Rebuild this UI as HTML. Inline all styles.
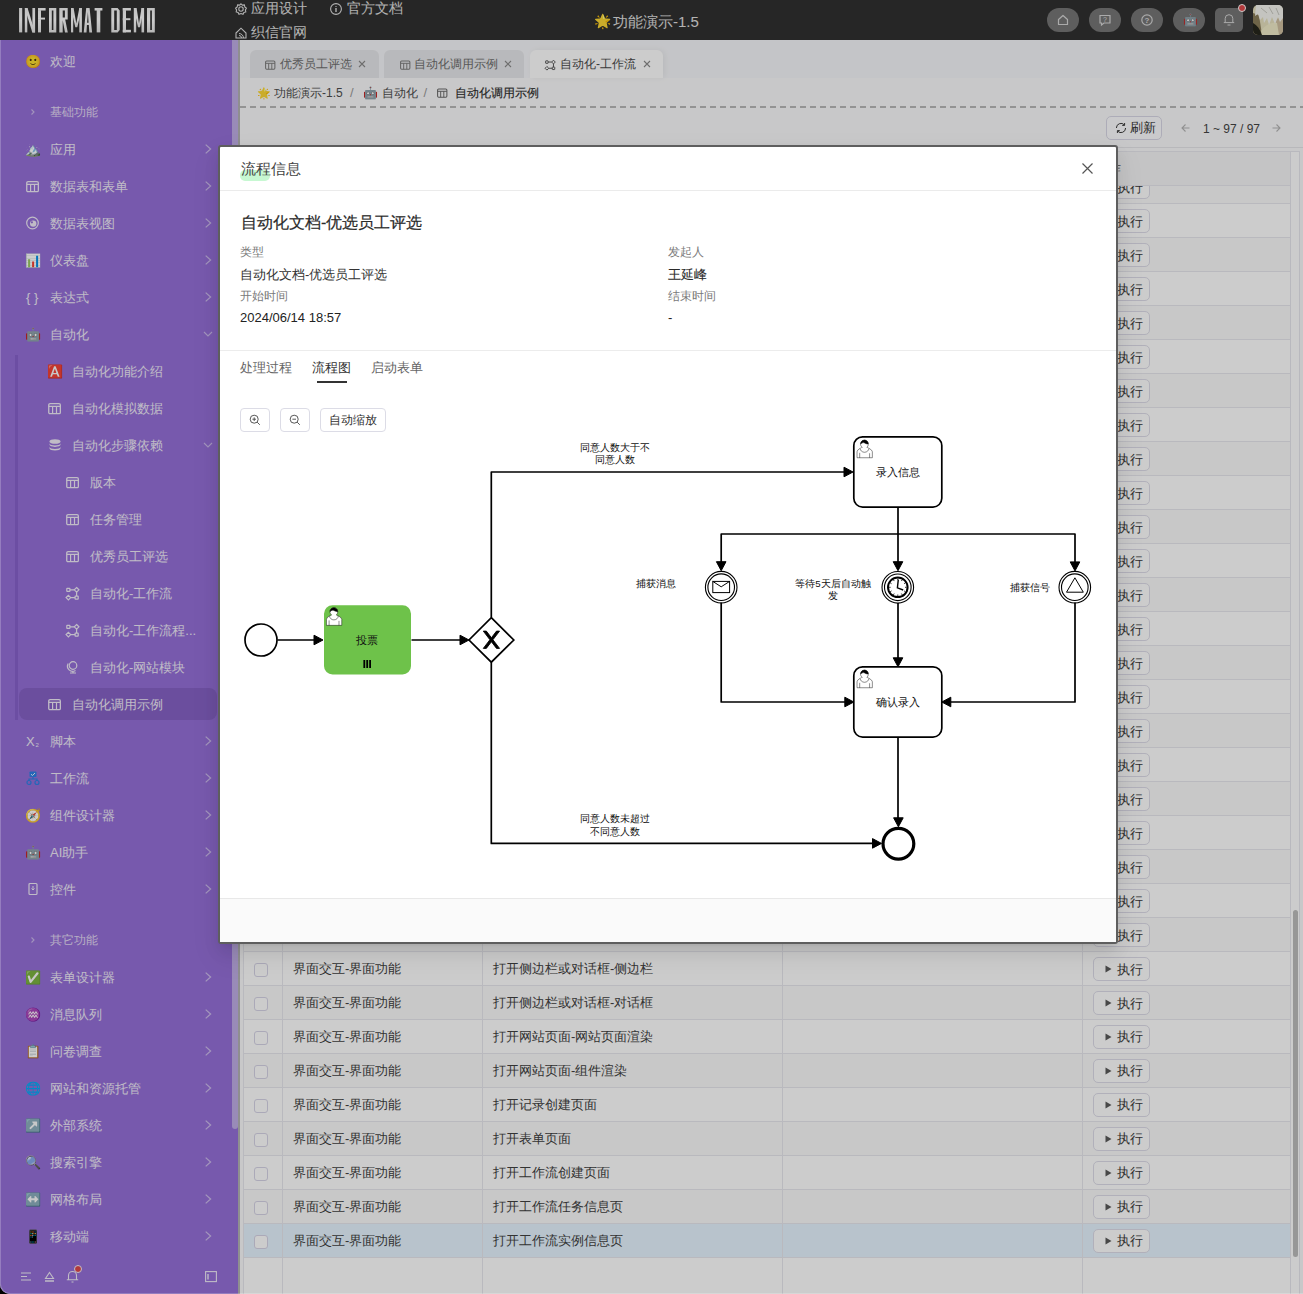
<!DOCTYPE html><html><head><meta charset="utf-8"><style>
*{box-sizing:border-box;margin:0;padding:0}
html,body{width:1303px;height:1294px;overflow:hidden;background:#000;font-family:"Liberation Sans",sans-serif}
.t{position:absolute;white-space:nowrap}
.a{position:absolute}
svg.a{overflow:visible}
.emo{font-family:"Liberation Sans",sans-serif}
</style></head><body>
<div id="page" class="a" style="left:0;top:0;width:1303px;height:1294px;overflow:hidden;border-radius:0 0 0 10px;background:#fbfbfc">
<div class="a" style="left:0px;top:0px;width:1303px;height:40px;background:#303030"></div>
<svg class="a" style="left:0px;top:0px;" width="170" height="40" viewBox="0 0 170 40"><defs><linearGradient id="lg" x1="0" y1="0" x2="0" y2="1"><stop offset="0" stop-color="#f2f2f2"/><stop offset="0.5" stop-color="#ffffff"/><stop offset="1" stop-color="#e6e6e6"/></linearGradient></defs><g fill="url(#lg)"><rect x="19.1" y="8.0" width="3.10" height="24.40"/><rect x="24.8" y="8.0" width="2.50" height="24.40"/><rect x="32.4" y="8.0" width="2.70" height="24.40"/><polygon points="24.8,8.0 27.6,8.0 35.1,32.4 32.3,32.4"/><rect x="38.0" y="8.0" width="3.00" height="24.40"/><rect x="38.0" y="8.0" width="7.60" height="2.60"/><rect x="38.0" y="17.6" width="7.00" height="2.00"/><path d="M49 8.0H56.3V32.4H49Z M51.8 10.5V29.9H53.4V10.5Z" fill-rule="evenodd"/><path d="M59.3 8.0H67.7V19.6H65.2L67.8 32.4H65.0L62.7 20.2V32.4H59.3Z M62.7 10.5V17.6H64.9V10.5Z" fill-rule="evenodd"/><rect x="71.0" y="8.0" width="2.20" height="24.40"/><rect x="79.3" y="8.0" width="2.60" height="24.40"/><polygon points="71.0,8.0 73.6,8.0 76.3,23.5 79.3,8.0 81.9,8.0 77.3,27.2 75.3,27.2"/><path d="M86.2 8.0H89.6L92.1 32.4H89.3L88.8 25H86.9L86.5 32.4H83.7Z M87.1 22.8H88.6L87.9 12Z" fill-rule="evenodd"/><rect x="94.6" y="8.0" width="7.80" height="2.60"/><rect x="96.7" y="8.0" width="3.60" height="24.40"/><path d="M111.3 8.0H117.6L119.7 10.5V29.9L117.6 32.4H111.3Z M114.2 10.5V29.9H116.8V10.5Z" fill-rule="evenodd"/><rect x="122.8" y="8.0" width="3.20" height="24.40"/><rect x="122.8" y="8.0" width="8.10" height="2.60"/><rect x="122.8" y="18.2" width="7.60" height="2.00"/><rect x="122.8" y="29.8" width="8.10" height="2.60"/><rect x="133.8" y="8.0" width="2.40" height="24.40"/><rect x="141.5" y="8.0" width="2.60" height="24.40"/><polygon points="133.8,8.0 136.6,8.0 139.0,23.5 141.5,8.0 144.1,8.0 140.0,27.2 138.0,27.2"/><path d="M147 8.0H154.8V32.4H147Z M150.2 10.5V29.9H151.9V10.5Z" fill-rule="evenodd"/></g></svg>
<svg class="a" style="left:235px;top:3px;" width="12" height="12" viewBox="0 0 12 12"><circle cx="6" cy="6" r="2.2" fill="none" stroke="#e0e0e0" stroke-width="1.1"/><path d="M6 0.8L7.4 2.1L9.4 1.9L9.8 3.9L11.4 5.2L10.4 6.9L10.8 8.9L8.9 9.5L8 11.3L6 10.6L4 11.3L3.1 9.5L1.2 8.9L1.6 6.9L0.6 5.2L2.2 3.9L2.6 1.9L4.6 2.1Z" fill="none" stroke="#e0e0e0" stroke-width="1.1"/></svg>
<div class="t" style="left:251px;top:-1.89px;font-size:14px;line-height:21px;color:#e0e0e0;font-weight:400;">应用设计</div>
<svg class="a" style="left:330px;top:3px;" width="12" height="12" viewBox="0 0 12 12"><circle cx="6" cy="6" r="5.4" fill="none" stroke="#e0e0e0" stroke-width="1.1"/><path d="M6 5V9M6 3V3.8" stroke="#e0e0e0" stroke-width="1.4"/></svg>
<div class="t" style="left:347px;top:-1.89px;font-size:14px;line-height:21px;color:#e0e0e0;font-weight:400;">官方文档</div>
<svg class="a" style="left:235px;top:27px;" width="12" height="12" viewBox="0 0 12 12"><path d="M1 6L6 1.2L11 6V11H1Z" fill="none" stroke="#e0e0e0" stroke-width="1.1"/><path d="M4 8.5A2.5 2.5 0 0 1 6.5 11M4 6.5A4.5 4.5 0 0 1 8.5 11" fill="none" stroke="#e0e0e0" stroke-width="1"/></svg>
<div class="t" style="left:251px;top:22.11px;font-size:14px;line-height:21px;color:#e0e0e0;font-weight:400;">织信官网</div>
<div class="t emo" style="left:593.5px;top:12px;font-size:14px;line-height:18px">🌟</div>
<div class="t" style="left:613px;top:10.53px;font-size:15px;line-height:22px;color:#e0e0e0;font-weight:400;">功能演示-1.5</div>
<div class="a" style="left:1047px;top:8px;width:32px;height:24px;background:#767676;border-radius:12px"></div>
<div class="a" style="left:1089px;top:8px;width:32px;height:24px;background:#767676;border-radius:12px"></div>
<div class="a" style="left:1131px;top:8px;width:32px;height:24px;background:#767676;border-radius:12px"></div>
<div class="a" style="left:1173px;top:8px;width:32px;height:24px;background:#767676;border-radius:12px"></div>
<svg class="a" style="left:1056px;top:13px;" width="14" height="14" viewBox="0 0 14 14"><path d="M2.5 6.5L7 2.5L11.5 6.5V11.5H2.5Z" fill="none" stroke="#d6d6d6" stroke-width="1.2" stroke-linejoin="round"/></svg>
<svg class="a" style="left:1098px;top:13px;" width="14" height="14" viewBox="0 0 14 14"><path d="M2 2.5H12V10H6L3.5 12V10H2Z" fill="none" stroke="#d6d6d6" stroke-width="1.2"/><text x="7" y="8.6" font-size="7" text-anchor="middle" fill="#d6d6d6" font-family="Liberation Sans">?</text></svg>
<svg class="a" style="left:1140px;top:13px;" width="14" height="14" viewBox="0 0 14 14"><circle cx="7" cy="7" r="5.2" fill="none" stroke="#d6d6d6" stroke-width="1.2"/><text x="7" y="9.8" font-size="8" text-anchor="middle" fill="#d6d6d6" font-family="Liberation Sans" font-weight="bold">?</text></svg>
<div class="t emo" style="left:1182.5px;top:11.5px;font-size:12px;line-height:16px;opacity:0.9">🤖</div>
<div class="a" style="left:1215px;top:8px;width:28px;height:24px;background:#767676;border-radius:5px"></div>
<svg class="a" style="left:1223px;top:13px;" width="12" height="14" viewBox="0 0 12 14"><path d="M2.2 9.5V5.5A3.8 3.8 0 0 1 9.8 5.5V9.5M0.8 9.6H11.2M4.5 12H7.5" fill="none" stroke="#d6d6d6" stroke-width="1"/></svg>
<div class="a" style="left:1237.5px;top:3.5px;width:8.6px;height:8.6px;background:#e0484a;border-radius:50%;border:1px solid #fff"></div>
<svg class="a" style="left:1253px;top:5px;" width="30" height="30" viewBox="0 0 30 30"><defs><clipPath id="avc"><rect x="0" y="0" width="30" height="30" rx="5"/></clipPath></defs><g clip-path="url(#avc)"><rect width="30" height="30" fill="#e6e0bf"/><path d="M0 8L6 10L9 30H0Z" fill="#8a7d5a"/><path d="M0 18C4 20 7 24 9 30H0Z" fill="#26261c"/><path d="M22 14L30 12V30H25Z" fill="#d0c0a0"/><path d="M8 26C12 20 18 17 24 18L26 30H9Z" fill="#f0ecc8"/><path d="M3 0H30V13L27 17L25 12L22 19L19 12L16 20L14 13L11 18L10 12L7 15L5 9L2 11Z" fill="#f6f6f0"/><path d="M8 3L14 8M16 2L20 9M23 3L26 10" stroke="#c8c8c0" stroke-width="1"/></g></svg>
<div class="a" style="left:0px;top:40px;width:232px;height:1260px;background:#9570d9"></div>
<div class="a" style="left:232px;top:40px;width:6px;height:1260px;background:#9570d9"></div>
<div class="a" style="left:232px;top:40px;width:6px;height:1089px;background:#c0aee6;border-radius:0 0 3px 3px"></div>
<div class="a" style="left:238px;top:40px;width:2px;height:1260px;background:#b3b3b3"></div>
<div class="t emo" style="left:25px;top:52.5px;font-size:13px;line-height:18px">🙂</div>
<div class="t" style="left:50px;top:51.70px;font-size:13px;line-height:20px;color:#f0ebf8;font-weight:400;">欢迎</div>
<svg class="a" style="left:30px;top:107px;" width="6" height="10" viewBox="0 0 6 10"><path d="M1.5 2.5L4 5L1.5 7.5" fill="none" stroke="#cbb9ec" stroke-width="1.1"/></svg>
<div class="t" style="left:50px;top:103.38px;font-size:12px;line-height:18px;color:#e4dbf5;font-weight:400;">基础功能</div>
<div class="t emo" style="left:25px;top:140.5px;font-size:13px;line-height:18px">🏔️</div>
<div class="t" style="left:50px;top:139.69px;font-size:13px;line-height:20px;color:#f0ebf8;font-weight:400;">应用</div>
<svg class="a" style="left:205px;top:144px;" width="7" height="10" viewBox="0 0 7 10"><path d="M0.7 0.6L5.6 5L0.7 9.4" fill="none" stroke="#cdbcec" stroke-width="1.25"/></svg>
<svg class="a" style="left:26px;top:179px;" width="14" height="14" viewBox="0 0 14 14"><rect x="0.75" y="2.6" width="11.6" height="10.1" rx="1.3" fill="none" stroke="#f0ebf8" stroke-width="1.3"/><path d="M0.75 5.4H12.35M4.6 5.4V12.7M8.5 5.4V12.7" stroke="#f0ebf8" stroke-width="1.2" fill="none"/></svg>
<div class="t" style="left:50px;top:176.69px;font-size:13px;line-height:20px;color:#f0ebf8;font-weight:400;">数据表和表单</div>
<svg class="a" style="left:205px;top:181px;" width="7" height="10" viewBox="0 0 7 10"><path d="M0.7 0.6L5.6 5L0.7 9.4" fill="none" stroke="#cdbcec" stroke-width="1.25"/></svg>
<svg class="a" style="left:26px;top:216px;" width="14" height="14" viewBox="0 0 14 14"><circle cx="6.5" cy="7" r="5.8" fill="none" stroke="#f0ebf8" stroke-width="1.2"/><circle cx="7.2" cy="7.6" r="3.2" fill="#f0ebf8"/><circle cx="5.9" cy="6.3" r="1.1" fill="#9570d9"/></svg>
<div class="t" style="left:50px;top:213.69px;font-size:13px;line-height:20px;color:#f0ebf8;font-weight:400;">数据表视图</div>
<svg class="a" style="left:205px;top:218px;" width="7" height="10" viewBox="0 0 7 10"><path d="M0.7 0.6L5.6 5L0.7 9.4" fill="none" stroke="#cdbcec" stroke-width="1.25"/></svg>
<div class="t emo" style="left:25px;top:251.5px;font-size:13px;line-height:18px">📊</div>
<div class="t" style="left:50px;top:250.69px;font-size:13px;line-height:20px;color:#f0ebf8;font-weight:400;">仪表盘</div>
<svg class="a" style="left:205px;top:255px;" width="7" height="10" viewBox="0 0 7 10"><path d="M0.7 0.6L5.6 5L0.7 9.4" fill="none" stroke="#cdbcec" stroke-width="1.25"/></svg>
<div class="t" style="left:26px;top:287.50px;font-size:13px;line-height:20px;color:#f0ebf8;font-weight:400;">{ }</div>
<div class="t" style="left:50px;top:287.50px;font-size:13px;line-height:20px;color:#f0ebf8;font-weight:400;">表达式</div>
<svg class="a" style="left:205px;top:292px;" width="7" height="10" viewBox="0 0 7 10"><path d="M0.7 0.6L5.6 5L0.7 9.4" fill="none" stroke="#cdbcec" stroke-width="1.25"/></svg>
<div class="t emo" style="left:25px;top:325.5px;font-size:13px;line-height:18px">🤖</div>
<div class="t" style="left:50px;top:324.69px;font-size:13px;line-height:20px;color:#f0ebf8;font-weight:400;">自动化</div>
<svg class="a" style="left:203px;top:331px;" width="10" height="6" viewBox="0 0 10 6"><path d="M1 1L5 5L9 1" fill="none" stroke="#cbb9ec" stroke-width="1.1"/></svg>
<div class="a" style="left:15px;top:355px;width:3px;height:365px;background:#8762cc"></div>
<div class="t emo" style="left:47px;top:362.5px;font-size:13px;line-height:18px">🅰️</div>
<div class="t" style="left:72px;top:361.69px;font-size:13px;line-height:20px;color:#f0ebf8;font-weight:400;">自动化功能介绍</div>
<svg class="a" style="left:48px;top:401px;" width="14" height="14" viewBox="0 0 14 14"><rect x="0.75" y="2.6" width="11.6" height="10.1" rx="1.3" fill="none" stroke="#f0ebf8" stroke-width="1.3"/><path d="M0.75 5.4H12.35M4.6 5.4V12.7M8.5 5.4V12.7" stroke="#f0ebf8" stroke-width="1.2" fill="none"/></svg>
<div class="t" style="left:72px;top:398.69px;font-size:13px;line-height:20px;color:#f0ebf8;font-weight:400;">自动化模拟数据</div>
<svg class="a" style="left:48px;top:438px;" width="14" height="14" viewBox="0 0 14 14"><ellipse cx="7" cy="3.5" rx="5.5" ry="2.3" fill="#f0ebf8"/><path d="M1.5 5.2V6.6C1.5 7.9 4 8.9 7 8.9S12.5 7.9 12.5 6.6V5.2C12.5 6.5 10 7.5 7 7.5S1.5 6.5 1.5 5.2ZM1.5 8.7V10.2C1.5 11.5 4 12.5 7 12.5S12.5 11.5 12.5 10.2V8.7C12.5 10 10 11 7 11S1.5 10 1.5 8.7Z" fill="#f0ebf8"/></svg>
<div class="t" style="left:72px;top:435.69px;font-size:13px;line-height:20px;color:#f0ebf8;font-weight:400;">自动化步骤依赖</div>
<svg class="a" style="left:203px;top:442px;" width="10" height="6" viewBox="0 0 10 6"><path d="M1 1L5 5L9 1" fill="none" stroke="#cbb9ec" stroke-width="1.1"/></svg>
<svg class="a" style="left:66px;top:475px;" width="14" height="14" viewBox="0 0 14 14"><rect x="0.75" y="2.6" width="11.6" height="10.1" rx="1.3" fill="none" stroke="#f0ebf8" stroke-width="1.3"/><path d="M0.75 5.4H12.35M4.6 5.4V12.7M8.5 5.4V12.7" stroke="#f0ebf8" stroke-width="1.2" fill="none"/></svg>
<div class="t" style="left:90px;top:472.69px;font-size:13px;line-height:20px;color:#f0ebf8;font-weight:400;">版本</div>
<svg class="a" style="left:66px;top:512px;" width="14" height="14" viewBox="0 0 14 14"><rect x="0.75" y="2.6" width="11.6" height="10.1" rx="1.3" fill="none" stroke="#f0ebf8" stroke-width="1.3"/><path d="M0.75 5.4H12.35M4.6 5.4V12.7M8.5 5.4V12.7" stroke="#f0ebf8" stroke-width="1.2" fill="none"/></svg>
<div class="t" style="left:90px;top:509.69px;font-size:13px;line-height:20px;color:#f0ebf8;font-weight:400;">任务管理</div>
<svg class="a" style="left:66px;top:549px;" width="14" height="14" viewBox="0 0 14 14"><rect x="0.75" y="2.6" width="11.6" height="10.1" rx="1.3" fill="none" stroke="#f0ebf8" stroke-width="1.3"/><path d="M0.75 5.4H12.35M4.6 5.4V12.7M8.5 5.4V12.7" stroke="#f0ebf8" stroke-width="1.2" fill="none"/></svg>
<div class="t" style="left:90px;top:546.70px;font-size:13px;line-height:20px;color:#f0ebf8;font-weight:400;">优秀员工评选</div>
<svg class="a" style="left:66px;top:586px;" width="14" height="14" viewBox="0 0 14 14"><g fill="none" stroke="#f0ebf8" stroke-width="1.2"><rect x="0.8" y="2.3" width="3.1" height="3.1" rx="0.4"/><path d="M10.6 1.5L12.9 3.8L10.6 6.1L8.3 3.8Z"/><path d="M2.4 9.3L4.7 11.6L2.4 13.9L0.1 11.6Z"/><rect x="9.1" y="10.1" width="3.1" height="3.1" rx="0.4"/><path d="M3.9 3.8H8.3M10.6 6.1V10.1M4.7 11.6H9.1"/></g></svg>
<div class="t" style="left:90px;top:583.70px;font-size:13px;line-height:20px;color:#f0ebf8;font-weight:400;">自动化-工作流</div>
<svg class="a" style="left:66px;top:623px;" width="14" height="14" viewBox="0 0 14 14"><g fill="none" stroke="#f0ebf8" stroke-width="1.2"><rect x="0.8" y="2.3" width="3.1" height="3.1" rx="0.4"/><path d="M10.6 1.5L12.9 3.8L10.6 6.1L8.3 3.8Z"/><path d="M2.4 9.3L4.7 11.6L2.4 13.9L0.1 11.6Z"/><rect x="9.1" y="10.1" width="3.1" height="3.1" rx="0.4"/><path d="M3.9 3.8H8.3M10.6 6.1V10.1M4.7 11.6H9.1"/></g></svg>
<div class="t" style="left:90px;top:620.70px;font-size:13px;line-height:20px;color:#f0ebf8;font-weight:400;">自动化-工作流程...</div>
<svg class="a" style="left:66px;top:660px;" width="14" height="14" viewBox="0 0 14 14"><circle cx="7" cy="5.5" r="3.8" fill="none" stroke="#f0ebf8" stroke-width="1.2"/><path d="M2.2 3.5A5.2 5.2 0 0 0 9.5 10.5M7 10.8V12.8M4 13H10" fill="none" stroke="#f0ebf8" stroke-width="1.2"/></svg>
<div class="t" style="left:90px;top:657.70px;font-size:13px;line-height:20px;color:#f0ebf8;font-weight:400;">自动化-网站模块</div>
<div class="a" style="left:19px;top:688px;width:198px;height:32px;background:#8662c6;border-radius:8px"></div>
<svg class="a" style="left:48px;top:697px;" width="14" height="14" viewBox="0 0 14 14"><rect x="0.75" y="2.6" width="11.6" height="10.1" rx="1.3" fill="none" stroke="#f0ebf8" stroke-width="1.3"/><path d="M0.75 5.4H12.35M4.6 5.4V12.7M8.5 5.4V12.7" stroke="#f0ebf8" stroke-width="1.2" fill="none"/></svg>
<div class="t" style="left:72px;top:694.70px;font-size:13px;line-height:20px;color:#f0ebf8;font-weight:400;">自动化调用示例</div>
<svg class="a" style="left:26px;top:734px;" width="14" height="14" viewBox="0 0 14 14"><text x="0" y="12" font-size="13" fill="#f0ebf8" font-family="Liberation Sans">X</text><text x="9.5" y="13" font-size="6" fill="#f0ebf8" font-family="Liberation Sans">2</text></svg>
<div class="t" style="left:50px;top:731.70px;font-size:13px;line-height:20px;color:#f0ebf8;font-weight:400;">脚本</div>
<svg class="a" style="left:205px;top:736px;" width="7" height="10" viewBox="0 0 7 10"><path d="M0.7 0.6L5.6 5L0.7 9.4" fill="none" stroke="#cdbcec" stroke-width="1.25"/></svg>
<svg class="a" style="left:26px;top:771px;" width="14" height="14" viewBox="0 0 14 14"><rect x="3.5" y="0.5" width="7" height="5.5" rx="0.8" fill="#2f80e6"/><path d="M5 3.2L6.5 4.5L9 2" fill="none" stroke="#fff" stroke-width="0.9"/><path d="M7 6V8M3 10V8H11V10" fill="none" stroke="#2f80e6" stroke-width="1.2"/><circle cx="3" cy="11.5" r="2" fill="none" stroke="#2f80e6" stroke-width="1.2"/><circle cx="11" cy="11.5" r="2" fill="none" stroke="#2f80e6" stroke-width="1.2"/></svg>
<div class="t" style="left:50px;top:768.70px;font-size:13px;line-height:20px;color:#f0ebf8;font-weight:400;">工作流</div>
<svg class="a" style="left:205px;top:773px;" width="7" height="10" viewBox="0 0 7 10"><path d="M0.7 0.6L5.6 5L0.7 9.4" fill="none" stroke="#cdbcec" stroke-width="1.25"/></svg>
<div class="t emo" style="left:25px;top:806.5px;font-size:13px;line-height:18px">🧭</div>
<div class="t" style="left:50px;top:805.70px;font-size:13px;line-height:20px;color:#f0ebf8;font-weight:400;">组件设计器</div>
<svg class="a" style="left:205px;top:810px;" width="7" height="10" viewBox="0 0 7 10"><path d="M0.7 0.6L5.6 5L0.7 9.4" fill="none" stroke="#cdbcec" stroke-width="1.25"/></svg>
<div class="t emo" style="left:25px;top:843.5px;font-size:13px;line-height:18px">🤖</div>
<div class="t" style="left:50px;top:842.70px;font-size:13px;line-height:20px;color:#f0ebf8;font-weight:400;">AI助手</div>
<svg class="a" style="left:205px;top:847px;" width="7" height="10" viewBox="0 0 7 10"><path d="M0.7 0.6L5.6 5L0.7 9.4" fill="none" stroke="#cdbcec" stroke-width="1.25"/></svg>
<svg class="a" style="left:26px;top:882px;" width="14" height="14" viewBox="0 0 14 14"><rect x="3" y="1.5" width="8" height="11" rx="1" fill="none" stroke="#f0ebf8" stroke-width="1.2"/><path d="M7 4V8M5.5 6.5L7 8L8.5 6.5" fill="none" stroke="#f0ebf8" stroke-width="1"/></svg>
<div class="t" style="left:50px;top:879.70px;font-size:13px;line-height:20px;color:#f0ebf8;font-weight:400;">控件</div>
<svg class="a" style="left:205px;top:884px;" width="7" height="10" viewBox="0 0 7 10"><path d="M0.7 0.6L5.6 5L0.7 9.4" fill="none" stroke="#cdbcec" stroke-width="1.25"/></svg>
<svg class="a" style="left:30px;top:935px;" width="6" height="10" viewBox="0 0 6 10"><path d="M1.5 2.5L4 5L1.5 7.5" fill="none" stroke="#cbb9ec" stroke-width="1.1"/></svg>
<div class="t" style="left:50px;top:931.38px;font-size:12px;line-height:18px;color:#e4dbf5;font-weight:400;">其它功能</div>
<div class="t emo" style="left:25px;top:968.5px;font-size:13px;line-height:18px">✅</div>
<div class="t" style="left:50px;top:967.70px;font-size:13px;line-height:20px;color:#f0ebf8;font-weight:400;">表单设计器</div>
<svg class="a" style="left:205px;top:972px;" width="7" height="10" viewBox="0 0 7 10"><path d="M0.7 0.6L5.6 5L0.7 9.4" fill="none" stroke="#cdbcec" stroke-width="1.25"/></svg>
<div class="t emo" style="left:25px;top:1005.5px;font-size:13px;line-height:18px">♒</div>
<div class="t" style="left:50px;top:1004.70px;font-size:13px;line-height:20px;color:#f0ebf8;font-weight:400;">消息队列</div>
<svg class="a" style="left:205px;top:1009px;" width="7" height="10" viewBox="0 0 7 10"><path d="M0.7 0.6L5.6 5L0.7 9.4" fill="none" stroke="#cdbcec" stroke-width="1.25"/></svg>
<div class="t emo" style="left:25px;top:1042.5px;font-size:13px;line-height:18px">📋</div>
<div class="t" style="left:50px;top:1041.69px;font-size:13px;line-height:20px;color:#f0ebf8;font-weight:400;">问卷调查</div>
<svg class="a" style="left:205px;top:1046px;" width="7" height="10" viewBox="0 0 7 10"><path d="M0.7 0.6L5.6 5L0.7 9.4" fill="none" stroke="#cdbcec" stroke-width="1.25"/></svg>
<div class="t emo" style="left:25px;top:1079.5px;font-size:13px;line-height:18px">🌐</div>
<div class="t" style="left:50px;top:1078.69px;font-size:13px;line-height:20px;color:#f0ebf8;font-weight:400;">网站和资源托管</div>
<svg class="a" style="left:205px;top:1083px;" width="7" height="10" viewBox="0 0 7 10"><path d="M0.7 0.6L5.6 5L0.7 9.4" fill="none" stroke="#cdbcec" stroke-width="1.25"/></svg>
<div class="t emo" style="left:25px;top:1116.5px;font-size:13px;line-height:18px">↗️</div>
<div class="t" style="left:50px;top:1115.69px;font-size:13px;line-height:20px;color:#f0ebf8;font-weight:400;">外部系统</div>
<svg class="a" style="left:205px;top:1120px;" width="7" height="10" viewBox="0 0 7 10"><path d="M0.7 0.6L5.6 5L0.7 9.4" fill="none" stroke="#cdbcec" stroke-width="1.25"/></svg>
<div class="t emo" style="left:25px;top:1153.5px;font-size:13px;line-height:18px">🔍</div>
<div class="t" style="left:50px;top:1152.69px;font-size:13px;line-height:20px;color:#f0ebf8;font-weight:400;">搜索引擎</div>
<svg class="a" style="left:205px;top:1157px;" width="7" height="10" viewBox="0 0 7 10"><path d="M0.7 0.6L5.6 5L0.7 9.4" fill="none" stroke="#cdbcec" stroke-width="1.25"/></svg>
<div class="t emo" style="left:25px;top:1190.5px;font-size:13px;line-height:18px">↔️</div>
<div class="t" style="left:50px;top:1189.69px;font-size:13px;line-height:20px;color:#f0ebf8;font-weight:400;">网格布局</div>
<svg class="a" style="left:205px;top:1194px;" width="7" height="10" viewBox="0 0 7 10"><path d="M0.7 0.6L5.6 5L0.7 9.4" fill="none" stroke="#cdbcec" stroke-width="1.25"/></svg>
<div class="t emo" style="left:25px;top:1227.5px;font-size:13px;line-height:18px">📱</div>
<div class="t" style="left:50px;top:1226.69px;font-size:13px;line-height:20px;color:#f0ebf8;font-weight:400;">移动端</div>
<svg class="a" style="left:205px;top:1231px;" width="7" height="10" viewBox="0 0 7 10"><path d="M0.7 0.6L5.6 5L0.7 9.4" fill="none" stroke="#cdbcec" stroke-width="1.25"/></svg>
<svg class="a" style="left:20px;top:1271px;" width="12" height="12" viewBox="0 0 12 12"><path d="M1 2H11M1 5.5H7M1 9H11" stroke="#f0ebf8" stroke-width="1.1"/></svg>
<svg class="a" style="left:44px;top:1271px;" width="11" height="12" viewBox="0 0 11 12"><path d="M5.5 1.5L9.5 7.5H1.5Z" fill="none" stroke="#f0ebf8" stroke-width="1.1"/><path d="M1 10H10" stroke="#f0ebf8" stroke-width="1.3"/></svg>
<svg class="a" style="left:66px;top:1270px;" width="13" height="13" viewBox="0 0 13 13"><path d="M2.5 9.5V5.5A4 4 0 0 1 10.5 5.5V9.5M0.8 9.8H12.2M5.5 12H7.5" fill="none" stroke="#f0ebf8" stroke-width="1.1"/></svg>
<div class="a" style="left:74px;top:1265px;width:8px;height:8px;background:#e0484a;border-radius:50%;border:1px solid #f3eefc"></div>
<svg class="a" style="left:205px;top:1271px;" width="12" height="12" viewBox="0 0 12 12"><rect x="0.6" y="0.6" width="10.8" height="10" fill="none" stroke="#f0ebf8" stroke-width="1.1"/><path d="M3 3V8.5" stroke="#f0ebf8" stroke-width="1.4"/></svg>
<div class="a" style="left:240px;top:40px;width:1063px;height:1260px;background:#fbfbfc"></div>
<div class="a" style="left:240px;top:40px;width:1063px;height:38px;background:#f6f7fa"></div>
<div class="a" style="left:250px;top:50px;width:129px;height:28px;background:#e7e8eb;border-radius:6px 6px 0 0;"></div>
<div class="a" style="left:384px;top:50px;width:140px;height:28px;background:#e7e8eb;border-radius:6px 6px 0 0;"></div>
<div class="a" style="left:530px;top:50px;width:133px;height:28px;background:#ffffff;border-radius:6px 6px 0 0;box-shadow:2px 0 6px rgba(0,0,0,0.06)"></div>
<svg class="a" style="left:265px;top:58.5px;" width="11" height="11" viewBox="0 0 11 11"><g transform="scale(0.8)"><rect x="0.75" y="2.6" width="11.6" height="10.1" rx="1.3" fill="none" stroke="#7c7c7c" stroke-width="1.3"/><path d="M0.75 5.4H12.35M4.6 5.4V12.7M8.5 5.4V12.7" stroke="#7c7c7c" stroke-width="1.2" fill="none"/></g></svg>
<div class="t" style="left:280px;top:55.38px;font-size:12px;line-height:18px;color:#6e6e6e;font-weight:400;">优秀员工评选</div>
<svg class="a" style="left:399.5px;top:58.5px;" width="11" height="11" viewBox="0 0 11 11"><g transform="scale(0.8)"><rect x="0.75" y="2.6" width="11.6" height="10.1" rx="1.3" fill="none" stroke="#7c7c7c" stroke-width="1.3"/><path d="M0.75 5.4H12.35M4.6 5.4V12.7M8.5 5.4V12.7" stroke="#7c7c7c" stroke-width="1.2" fill="none"/></g></svg>
<div class="t" style="left:414px;top:55.38px;font-size:12px;line-height:18px;color:#6e6e6e;font-weight:400;">自动化调用示例</div>
<svg class="a" style="left:545px;top:58.5px;" width="11" height="11" viewBox="0 0 11 11"><g transform="scale(0.8)"><g fill="none" stroke="#555" stroke-width="1.2"><rect x="0.8" y="2.3" width="3.1" height="3.1" rx="0.4"/><path d="M10.6 1.5L12.9 3.8L10.6 6.1L8.3 3.8Z"/><path d="M2.4 9.3L4.7 11.6L2.4 13.9L0.1 11.6Z"/><rect x="9.1" y="10.1" width="3.1" height="3.1" rx="0.4"/><path d="M3.9 3.8H8.3M10.6 6.1V10.1M4.7 11.6H9.1"/></g></g></svg>
<div class="t" style="left:560px;top:55.38px;font-size:12px;line-height:18px;color:#4a4a4a;font-weight:400;">自动化-工作流</div>
<svg class="a" style="left:358px;top:60px;" width="8" height="8" viewBox="0 0 8 8"><path d="M1 1L7 7M7 1L1 7" stroke="#8a8a8a" stroke-width="1.1"/></svg>
<svg class="a" style="left:504px;top:60px;" width="8" height="8" viewBox="0 0 8 8"><path d="M1 1L7 7M7 1L1 7" stroke="#8a8a8a" stroke-width="1.1"/></svg>
<svg class="a" style="left:643px;top:60px;" width="8" height="8" viewBox="0 0 8 8"><path d="M1 1L7 7M7 1L1 7" stroke="#8a8a8a" stroke-width="1.1"/></svg>
<div class="t emo" style="left:256.5px;top:84px;font-size:11px;line-height:18px">🌟</div>
<div class="t" style="left:274px;top:83.88px;font-size:12px;line-height:18px;color:#4d4d4d;font-weight:400;">功能演示-1.5</div>
<div class="t" style="left:350px;top:83.00px;font-size:13px;line-height:20px;color:#9a9a9a;font-weight:400;">/</div>
<div class="t emo" style="left:363px;top:84px;font-size:12px;line-height:18px">🤖</div>
<div class="t" style="left:381.5px;top:83.88px;font-size:12px;line-height:18px;color:#4d4d4d;font-weight:400;">自动化</div>
<div class="t" style="left:423.5px;top:83.00px;font-size:13px;line-height:20px;color:#9a9a9a;font-weight:400;">/</div>
<svg class="a" style="left:436.5px;top:87px;" width="11" height="11" viewBox="0 0 11 11"><g transform="scale(0.8)"><rect x="0.75" y="2.6" width="11.6" height="10.1" rx="1.3" fill="none" stroke="#6a6a6a" stroke-width="1.3"/><path d="M0.75 5.4H12.35M4.6 5.4V12.7M8.5 5.4V12.7" stroke="#6a6a6a" stroke-width="1.2" fill="none"/></g></svg>
<div class="t" style="left:455px;top:83.88px;font-size:12px;line-height:18px;color:#2e2e2e;font-weight:400;-webkit-text-stroke:0.15px #2e2e2e">自动化调用示例</div>
<div class="a" style="left:240px;top:106px;width:1063px;height:2px;background-image:linear-gradient(90deg,#b8b8b8 0 6px,transparent 6px 10px);background-size:10px 2px"></div>
<div class="a" style="left:1106px;top:116px;width:56px;height:24px;background:#fdfdff;border:1px solid #d9d8e6;border-radius:5px"></div>
<svg class="a" style="left:1115px;top:122px;" width="12" height="12" viewBox="0 0 12 12"><path d="M10.6 6A4.6 4.6 0 0 1 2.6 9.1M1.4 6A4.6 4.6 0 0 1 9.4 2.9" fill="none" stroke="#3a3a3a" stroke-width="1"/><path d="M9.6 1V3.4H7.2M2.4 11V8.6H4.8" fill="none" stroke="#3a3a3a" stroke-width="1"/></svg>
<div class="t" style="left:1130px;top:118.09px;font-size:13px;line-height:20px;color:#333;font-weight:400;">刷新</div>
<svg class="a" style="left:1181px;top:124px;" width="9" height="8" viewBox="0 0 9 8"><path d="M8.5 4H1M4.5 0.5L1 4L4.5 7.5" fill="none" stroke="#b5b5b5" stroke-width="1.1"/></svg>
<div class="t" style="left:1203px;top:119.58px;font-size:12px;line-height:18px;color:#444;font-weight:400;">1 ~ 97 / 97</div>
<svg class="a" style="left:1272px;top:124px;" width="9" height="8" viewBox="0 0 9 8"><path d="M0.5 4H8M4.5 0.5L8 4L4.5 7.5" fill="none" stroke="#b5b5b5" stroke-width="1.1"/></svg>
<div class="a" style="left:240px;top:147px;width:1063px;height:1px;background:#e6e6ea"></div>
<div class="a" style="left:243px;top:151px;width:1057px;height:1150px;background:#ffffff;border-left:1px solid #e8e8ee;border-top:1px solid #e8e8ee"></div>
<div class="a" style="left:244px;top:1224px;width:1046px;height:33px;background:#e6f4ff"></div>
<div class="a" style="left:244px;top:170px;width:1046px;height:33px;background:#fafafa"></div>
<div class="a" style="left:1093px;top:175px;width:57px;height:24px;background:#fff;border:1px solid #dedde9;border-radius:5px"></div>
<svg class="a" style="left:1105px;top:183px;" width="7" height="8" viewBox="0 0 7 8"><path d="M0.5 0.5L6.5 4L0.5 7.5Z" fill="#5a5a5a"/></svg>
<div class="t" style="left:1117px;top:177.50px;font-size:13px;line-height:20px;color:#3a3a3a;font-weight:400;">执行</div>
<div class="a" style="left:243px;top:203px;width:1047px;height:1px;background:#e8e8ee"></div>
<div class="a" style="left:1290px;top:203px;width:10px;height:1px;background:#e8e8ee"></div>
<div class="a" style="left:1093px;top:209px;width:57px;height:24px;background:#fff;border:1px solid #dedde9;border-radius:5px"></div>
<svg class="a" style="left:1105px;top:217px;" width="7" height="8" viewBox="0 0 7 8"><path d="M0.5 0.5L6.5 4L0.5 7.5Z" fill="#5a5a5a"/></svg>
<div class="t" style="left:1117px;top:211.50px;font-size:13px;line-height:20px;color:#3a3a3a;font-weight:400;">执行</div>
<div class="a" style="left:243px;top:237px;width:1047px;height:1px;background:#e8e8ee"></div>
<div class="a" style="left:1290px;top:237px;width:10px;height:1px;background:#e8e8ee"></div>
<div class="a" style="left:244px;top:238px;width:1046px;height:33px;background:#fafafa"></div>
<div class="a" style="left:1093px;top:243px;width:57px;height:24px;background:#fff;border:1px solid #dedde9;border-radius:5px"></div>
<svg class="a" style="left:1105px;top:251px;" width="7" height="8" viewBox="0 0 7 8"><path d="M0.5 0.5L6.5 4L0.5 7.5Z" fill="#5a5a5a"/></svg>
<div class="t" style="left:1117px;top:245.50px;font-size:13px;line-height:20px;color:#3a3a3a;font-weight:400;">执行</div>
<div class="a" style="left:243px;top:271px;width:1047px;height:1px;background:#e8e8ee"></div>
<div class="a" style="left:1290px;top:271px;width:10px;height:1px;background:#e8e8ee"></div>
<div class="a" style="left:1093px;top:277px;width:57px;height:24px;background:#fff;border:1px solid #dedde9;border-radius:5px"></div>
<svg class="a" style="left:1105px;top:285px;" width="7" height="8" viewBox="0 0 7 8"><path d="M0.5 0.5L6.5 4L0.5 7.5Z" fill="#5a5a5a"/></svg>
<div class="t" style="left:1117px;top:279.50px;font-size:13px;line-height:20px;color:#3a3a3a;font-weight:400;">执行</div>
<div class="a" style="left:243px;top:305px;width:1047px;height:1px;background:#e8e8ee"></div>
<div class="a" style="left:1290px;top:305px;width:10px;height:1px;background:#e8e8ee"></div>
<div class="a" style="left:244px;top:306px;width:1046px;height:33px;background:#fafafa"></div>
<div class="a" style="left:1093px;top:311px;width:57px;height:24px;background:#fff;border:1px solid #dedde9;border-radius:5px"></div>
<svg class="a" style="left:1105px;top:319px;" width="7" height="8" viewBox="0 0 7 8"><path d="M0.5 0.5L6.5 4L0.5 7.5Z" fill="#5a5a5a"/></svg>
<div class="t" style="left:1117px;top:313.50px;font-size:13px;line-height:20px;color:#3a3a3a;font-weight:400;">执行</div>
<div class="a" style="left:243px;top:339px;width:1047px;height:1px;background:#e8e8ee"></div>
<div class="a" style="left:1290px;top:339px;width:10px;height:1px;background:#e8e8ee"></div>
<div class="a" style="left:1093px;top:345px;width:57px;height:24px;background:#fff;border:1px solid #dedde9;border-radius:5px"></div>
<svg class="a" style="left:1105px;top:353px;" width="7" height="8" viewBox="0 0 7 8"><path d="M0.5 0.5L6.5 4L0.5 7.5Z" fill="#5a5a5a"/></svg>
<div class="t" style="left:1117px;top:347.50px;font-size:13px;line-height:20px;color:#3a3a3a;font-weight:400;">执行</div>
<div class="a" style="left:243px;top:373px;width:1047px;height:1px;background:#e8e8ee"></div>
<div class="a" style="left:1290px;top:373px;width:10px;height:1px;background:#e8e8ee"></div>
<div class="a" style="left:244px;top:374px;width:1046px;height:33px;background:#fafafa"></div>
<div class="a" style="left:1093px;top:379px;width:57px;height:24px;background:#fff;border:1px solid #dedde9;border-radius:5px"></div>
<svg class="a" style="left:1105px;top:387px;" width="7" height="8" viewBox="0 0 7 8"><path d="M0.5 0.5L6.5 4L0.5 7.5Z" fill="#5a5a5a"/></svg>
<div class="t" style="left:1117px;top:381.50px;font-size:13px;line-height:20px;color:#3a3a3a;font-weight:400;">执行</div>
<div class="a" style="left:243px;top:407px;width:1047px;height:1px;background:#e8e8ee"></div>
<div class="a" style="left:1290px;top:407px;width:10px;height:1px;background:#e8e8ee"></div>
<div class="a" style="left:1093px;top:413px;width:57px;height:24px;background:#fff;border:1px solid #dedde9;border-radius:5px"></div>
<svg class="a" style="left:1105px;top:421px;" width="7" height="8" viewBox="0 0 7 8"><path d="M0.5 0.5L6.5 4L0.5 7.5Z" fill="#5a5a5a"/></svg>
<div class="t" style="left:1117px;top:415.50px;font-size:13px;line-height:20px;color:#3a3a3a;font-weight:400;">执行</div>
<div class="a" style="left:243px;top:441px;width:1047px;height:1px;background:#e8e8ee"></div>
<div class="a" style="left:1290px;top:441px;width:10px;height:1px;background:#e8e8ee"></div>
<div class="a" style="left:244px;top:442px;width:1046px;height:33px;background:#fafafa"></div>
<div class="a" style="left:1093px;top:447px;width:57px;height:24px;background:#fff;border:1px solid #dedde9;border-radius:5px"></div>
<svg class="a" style="left:1105px;top:455px;" width="7" height="8" viewBox="0 0 7 8"><path d="M0.5 0.5L6.5 4L0.5 7.5Z" fill="#5a5a5a"/></svg>
<div class="t" style="left:1117px;top:449.50px;font-size:13px;line-height:20px;color:#3a3a3a;font-weight:400;">执行</div>
<div class="a" style="left:243px;top:475px;width:1047px;height:1px;background:#e8e8ee"></div>
<div class="a" style="left:1290px;top:475px;width:10px;height:1px;background:#e8e8ee"></div>
<div class="a" style="left:1093px;top:481px;width:57px;height:24px;background:#fff;border:1px solid #dedde9;border-radius:5px"></div>
<svg class="a" style="left:1105px;top:489px;" width="7" height="8" viewBox="0 0 7 8"><path d="M0.5 0.5L6.5 4L0.5 7.5Z" fill="#5a5a5a"/></svg>
<div class="t" style="left:1117px;top:483.50px;font-size:13px;line-height:20px;color:#3a3a3a;font-weight:400;">执行</div>
<div class="a" style="left:243px;top:509px;width:1047px;height:1px;background:#e8e8ee"></div>
<div class="a" style="left:1290px;top:509px;width:10px;height:1px;background:#e8e8ee"></div>
<div class="a" style="left:244px;top:510px;width:1046px;height:33px;background:#fafafa"></div>
<div class="a" style="left:1093px;top:515px;width:57px;height:24px;background:#fff;border:1px solid #dedde9;border-radius:5px"></div>
<svg class="a" style="left:1105px;top:523px;" width="7" height="8" viewBox="0 0 7 8"><path d="M0.5 0.5L6.5 4L0.5 7.5Z" fill="#5a5a5a"/></svg>
<div class="t" style="left:1117px;top:517.50px;font-size:13px;line-height:20px;color:#3a3a3a;font-weight:400;">执行</div>
<div class="a" style="left:243px;top:543px;width:1047px;height:1px;background:#e8e8ee"></div>
<div class="a" style="left:1290px;top:543px;width:10px;height:1px;background:#e8e8ee"></div>
<div class="a" style="left:1093px;top:549px;width:57px;height:24px;background:#fff;border:1px solid #dedde9;border-radius:5px"></div>
<svg class="a" style="left:1105px;top:557px;" width="7" height="8" viewBox="0 0 7 8"><path d="M0.5 0.5L6.5 4L0.5 7.5Z" fill="#5a5a5a"/></svg>
<div class="t" style="left:1117px;top:551.50px;font-size:13px;line-height:20px;color:#3a3a3a;font-weight:400;">执行</div>
<div class="a" style="left:243px;top:577px;width:1047px;height:1px;background:#e8e8ee"></div>
<div class="a" style="left:1290px;top:577px;width:10px;height:1px;background:#e8e8ee"></div>
<div class="a" style="left:244px;top:578px;width:1046px;height:33px;background:#fafafa"></div>
<div class="a" style="left:1093px;top:583px;width:57px;height:24px;background:#fff;border:1px solid #dedde9;border-radius:5px"></div>
<svg class="a" style="left:1105px;top:591px;" width="7" height="8" viewBox="0 0 7 8"><path d="M0.5 0.5L6.5 4L0.5 7.5Z" fill="#5a5a5a"/></svg>
<div class="t" style="left:1117px;top:585.50px;font-size:13px;line-height:20px;color:#3a3a3a;font-weight:400;">执行</div>
<div class="a" style="left:243px;top:611px;width:1047px;height:1px;background:#e8e8ee"></div>
<div class="a" style="left:1290px;top:611px;width:10px;height:1px;background:#e8e8ee"></div>
<div class="a" style="left:1093px;top:617px;width:57px;height:24px;background:#fff;border:1px solid #dedde9;border-radius:5px"></div>
<svg class="a" style="left:1105px;top:625px;" width="7" height="8" viewBox="0 0 7 8"><path d="M0.5 0.5L6.5 4L0.5 7.5Z" fill="#5a5a5a"/></svg>
<div class="t" style="left:1117px;top:619.50px;font-size:13px;line-height:20px;color:#3a3a3a;font-weight:400;">执行</div>
<div class="a" style="left:243px;top:645px;width:1047px;height:1px;background:#e8e8ee"></div>
<div class="a" style="left:1290px;top:645px;width:10px;height:1px;background:#e8e8ee"></div>
<div class="a" style="left:244px;top:646px;width:1046px;height:33px;background:#fafafa"></div>
<div class="a" style="left:1093px;top:651px;width:57px;height:24px;background:#fff;border:1px solid #dedde9;border-radius:5px"></div>
<svg class="a" style="left:1105px;top:659px;" width="7" height="8" viewBox="0 0 7 8"><path d="M0.5 0.5L6.5 4L0.5 7.5Z" fill="#5a5a5a"/></svg>
<div class="t" style="left:1117px;top:653.50px;font-size:13px;line-height:20px;color:#3a3a3a;font-weight:400;">执行</div>
<div class="a" style="left:243px;top:679px;width:1047px;height:1px;background:#e8e8ee"></div>
<div class="a" style="left:1290px;top:679px;width:10px;height:1px;background:#e8e8ee"></div>
<div class="a" style="left:1093px;top:685px;width:57px;height:24px;background:#fff;border:1px solid #dedde9;border-radius:5px"></div>
<svg class="a" style="left:1105px;top:693px;" width="7" height="8" viewBox="0 0 7 8"><path d="M0.5 0.5L6.5 4L0.5 7.5Z" fill="#5a5a5a"/></svg>
<div class="t" style="left:1117px;top:687.50px;font-size:13px;line-height:20px;color:#3a3a3a;font-weight:400;">执行</div>
<div class="a" style="left:243px;top:713px;width:1047px;height:1px;background:#e8e8ee"></div>
<div class="a" style="left:1290px;top:713px;width:10px;height:1px;background:#e8e8ee"></div>
<div class="a" style="left:244px;top:714px;width:1046px;height:33px;background:#fafafa"></div>
<div class="a" style="left:1093px;top:719px;width:57px;height:24px;background:#fff;border:1px solid #dedde9;border-radius:5px"></div>
<svg class="a" style="left:1105px;top:727px;" width="7" height="8" viewBox="0 0 7 8"><path d="M0.5 0.5L6.5 4L0.5 7.5Z" fill="#5a5a5a"/></svg>
<div class="t" style="left:1117px;top:721.50px;font-size:13px;line-height:20px;color:#3a3a3a;font-weight:400;">执行</div>
<div class="a" style="left:243px;top:747px;width:1047px;height:1px;background:#e8e8ee"></div>
<div class="a" style="left:1290px;top:747px;width:10px;height:1px;background:#e8e8ee"></div>
<div class="a" style="left:1093px;top:753px;width:57px;height:24px;background:#fff;border:1px solid #dedde9;border-radius:5px"></div>
<svg class="a" style="left:1105px;top:761px;" width="7" height="8" viewBox="0 0 7 8"><path d="M0.5 0.5L6.5 4L0.5 7.5Z" fill="#5a5a5a"/></svg>
<div class="t" style="left:1117px;top:755.50px;font-size:13px;line-height:20px;color:#3a3a3a;font-weight:400;">执行</div>
<div class="a" style="left:243px;top:781px;width:1047px;height:1px;background:#e8e8ee"></div>
<div class="a" style="left:1290px;top:781px;width:10px;height:1px;background:#e8e8ee"></div>
<div class="a" style="left:244px;top:782px;width:1046px;height:33px;background:#fafafa"></div>
<div class="a" style="left:1093px;top:787px;width:57px;height:24px;background:#fff;border:1px solid #dedde9;border-radius:5px"></div>
<svg class="a" style="left:1105px;top:795px;" width="7" height="8" viewBox="0 0 7 8"><path d="M0.5 0.5L6.5 4L0.5 7.5Z" fill="#5a5a5a"/></svg>
<div class="t" style="left:1117px;top:789.50px;font-size:13px;line-height:20px;color:#3a3a3a;font-weight:400;">执行</div>
<div class="a" style="left:243px;top:815px;width:1047px;height:1px;background:#e8e8ee"></div>
<div class="a" style="left:1290px;top:815px;width:10px;height:1px;background:#e8e8ee"></div>
<div class="a" style="left:1093px;top:821px;width:57px;height:24px;background:#fff;border:1px solid #dedde9;border-radius:5px"></div>
<svg class="a" style="left:1105px;top:829px;" width="7" height="8" viewBox="0 0 7 8"><path d="M0.5 0.5L6.5 4L0.5 7.5Z" fill="#5a5a5a"/></svg>
<div class="t" style="left:1117px;top:823.50px;font-size:13px;line-height:20px;color:#3a3a3a;font-weight:400;">执行</div>
<div class="a" style="left:243px;top:849px;width:1047px;height:1px;background:#e8e8ee"></div>
<div class="a" style="left:1290px;top:849px;width:10px;height:1px;background:#e8e8ee"></div>
<div class="a" style="left:244px;top:850px;width:1046px;height:33px;background:#fafafa"></div>
<div class="a" style="left:1093px;top:855px;width:57px;height:24px;background:#fff;border:1px solid #dedde9;border-radius:5px"></div>
<svg class="a" style="left:1105px;top:863px;" width="7" height="8" viewBox="0 0 7 8"><path d="M0.5 0.5L6.5 4L0.5 7.5Z" fill="#5a5a5a"/></svg>
<div class="t" style="left:1117px;top:857.50px;font-size:13px;line-height:20px;color:#3a3a3a;font-weight:400;">执行</div>
<div class="a" style="left:243px;top:883px;width:1047px;height:1px;background:#e8e8ee"></div>
<div class="a" style="left:1290px;top:883px;width:10px;height:1px;background:#e8e8ee"></div>
<div class="a" style="left:1093px;top:889px;width:57px;height:24px;background:#fff;border:1px solid #dedde9;border-radius:5px"></div>
<svg class="a" style="left:1105px;top:897px;" width="7" height="8" viewBox="0 0 7 8"><path d="M0.5 0.5L6.5 4L0.5 7.5Z" fill="#5a5a5a"/></svg>
<div class="t" style="left:1117px;top:891.50px;font-size:13px;line-height:20px;color:#3a3a3a;font-weight:400;">执行</div>
<div class="a" style="left:243px;top:917px;width:1047px;height:1px;background:#e8e8ee"></div>
<div class="a" style="left:1290px;top:917px;width:10px;height:1px;background:#e8e8ee"></div>
<div class="a" style="left:244px;top:918px;width:1046px;height:33px;background:#fafafa"></div>
<div class="a" style="left:1093px;top:923px;width:57px;height:24px;background:#fff;border:1px solid #dedde9;border-radius:5px"></div>
<svg class="a" style="left:1105px;top:931px;" width="7" height="8" viewBox="0 0 7 8"><path d="M0.5 0.5L6.5 4L0.5 7.5Z" fill="#5a5a5a"/></svg>
<div class="t" style="left:1117px;top:925.50px;font-size:13px;line-height:20px;color:#3a3a3a;font-weight:400;">执行</div>
<div class="a" style="left:243px;top:951px;width:1047px;height:1px;background:#e8e8ee"></div>
<div class="a" style="left:1290px;top:951px;width:10px;height:1px;background:#e8e8ee"></div>
<div class="a" style="left:1093px;top:957px;width:57px;height:24px;background:#fff;border:1px solid #dedde9;border-radius:5px"></div>
<svg class="a" style="left:1105px;top:965px;" width="7" height="8" viewBox="0 0 7 8"><path d="M0.5 0.5L6.5 4L0.5 7.5Z" fill="#5a5a5a"/></svg>
<div class="t" style="left:1117px;top:959.50px;font-size:13px;line-height:20px;color:#3a3a3a;font-weight:400;">执行</div>
<div class="a" style="left:243px;top:985px;width:1047px;height:1px;background:#e8e8ee"></div>
<div class="a" style="left:1290px;top:985px;width:10px;height:1px;background:#e8e8ee"></div>
<div class="a" style="left:244px;top:986px;width:1046px;height:33px;background:#fafafa"></div>
<div class="a" style="left:1093px;top:991px;width:57px;height:24px;background:#fff;border:1px solid #dedde9;border-radius:5px"></div>
<svg class="a" style="left:1105px;top:999px;" width="7" height="8" viewBox="0 0 7 8"><path d="M0.5 0.5L6.5 4L0.5 7.5Z" fill="#5a5a5a"/></svg>
<div class="t" style="left:1117px;top:993.50px;font-size:13px;line-height:20px;color:#3a3a3a;font-weight:400;">执行</div>
<div class="a" style="left:243px;top:1019px;width:1047px;height:1px;background:#e8e8ee"></div>
<div class="a" style="left:1290px;top:1019px;width:10px;height:1px;background:#e8e8ee"></div>
<div class="a" style="left:1093px;top:1025px;width:57px;height:24px;background:#fff;border:1px solid #dedde9;border-radius:5px"></div>
<svg class="a" style="left:1105px;top:1033px;" width="7" height="8" viewBox="0 0 7 8"><path d="M0.5 0.5L6.5 4L0.5 7.5Z" fill="#5a5a5a"/></svg>
<div class="t" style="left:1117px;top:1027.49px;font-size:13px;line-height:20px;color:#3a3a3a;font-weight:400;">执行</div>
<div class="a" style="left:243px;top:1053px;width:1047px;height:1px;background:#e8e8ee"></div>
<div class="a" style="left:1290px;top:1053px;width:10px;height:1px;background:#e8e8ee"></div>
<div class="a" style="left:244px;top:1054px;width:1046px;height:33px;background:#fafafa"></div>
<div class="a" style="left:1093px;top:1059px;width:57px;height:24px;background:#fff;border:1px solid #dedde9;border-radius:5px"></div>
<svg class="a" style="left:1105px;top:1067px;" width="7" height="8" viewBox="0 0 7 8"><path d="M0.5 0.5L6.5 4L0.5 7.5Z" fill="#5a5a5a"/></svg>
<div class="t" style="left:1117px;top:1061.49px;font-size:13px;line-height:20px;color:#3a3a3a;font-weight:400;">执行</div>
<div class="a" style="left:243px;top:1087px;width:1047px;height:1px;background:#e8e8ee"></div>
<div class="a" style="left:1290px;top:1087px;width:10px;height:1px;background:#e8e8ee"></div>
<div class="a" style="left:1093px;top:1093px;width:57px;height:24px;background:#fff;border:1px solid #dedde9;border-radius:5px"></div>
<svg class="a" style="left:1105px;top:1101px;" width="7" height="8" viewBox="0 0 7 8"><path d="M0.5 0.5L6.5 4L0.5 7.5Z" fill="#5a5a5a"/></svg>
<div class="t" style="left:1117px;top:1095.49px;font-size:13px;line-height:20px;color:#3a3a3a;font-weight:400;">执行</div>
<div class="a" style="left:243px;top:1121px;width:1047px;height:1px;background:#e8e8ee"></div>
<div class="a" style="left:1290px;top:1121px;width:10px;height:1px;background:#e8e8ee"></div>
<div class="a" style="left:244px;top:1122px;width:1046px;height:33px;background:#fafafa"></div>
<div class="a" style="left:1093px;top:1127px;width:57px;height:24px;background:#fff;border:1px solid #dedde9;border-radius:5px"></div>
<svg class="a" style="left:1105px;top:1135px;" width="7" height="8" viewBox="0 0 7 8"><path d="M0.5 0.5L6.5 4L0.5 7.5Z" fill="#5a5a5a"/></svg>
<div class="t" style="left:1117px;top:1129.49px;font-size:13px;line-height:20px;color:#3a3a3a;font-weight:400;">执行</div>
<div class="a" style="left:243px;top:1155px;width:1047px;height:1px;background:#e8e8ee"></div>
<div class="a" style="left:1290px;top:1155px;width:10px;height:1px;background:#e8e8ee"></div>
<div class="a" style="left:1093px;top:1161px;width:57px;height:24px;background:#fff;border:1px solid #dedde9;border-radius:5px"></div>
<svg class="a" style="left:1105px;top:1169px;" width="7" height="8" viewBox="0 0 7 8"><path d="M0.5 0.5L6.5 4L0.5 7.5Z" fill="#5a5a5a"/></svg>
<div class="t" style="left:1117px;top:1163.49px;font-size:13px;line-height:20px;color:#3a3a3a;font-weight:400;">执行</div>
<div class="a" style="left:243px;top:1189px;width:1047px;height:1px;background:#e8e8ee"></div>
<div class="a" style="left:1290px;top:1189px;width:10px;height:1px;background:#e8e8ee"></div>
<div class="a" style="left:244px;top:1190px;width:1046px;height:33px;background:#fafafa"></div>
<div class="a" style="left:1093px;top:1195px;width:57px;height:24px;background:#fff;border:1px solid #dedde9;border-radius:5px"></div>
<svg class="a" style="left:1105px;top:1203px;" width="7" height="8" viewBox="0 0 7 8"><path d="M0.5 0.5L6.5 4L0.5 7.5Z" fill="#5a5a5a"/></svg>
<div class="t" style="left:1117px;top:1197.49px;font-size:13px;line-height:20px;color:#3a3a3a;font-weight:400;">执行</div>
<div class="a" style="left:243px;top:1223px;width:1047px;height:1px;background:#e8e8ee"></div>
<div class="a" style="left:1290px;top:1223px;width:10px;height:1px;background:#e8e8ee"></div>
<div class="a" style="left:1093px;top:1229px;width:57px;height:24px;background:#fff;border:1px solid #dedde9;border-radius:5px"></div>
<svg class="a" style="left:1105px;top:1237px;" width="7" height="8" viewBox="0 0 7 8"><path d="M0.5 0.5L6.5 4L0.5 7.5Z" fill="#5a5a5a"/></svg>
<div class="t" style="left:1117px;top:1231.49px;font-size:13px;line-height:20px;color:#3a3a3a;font-weight:400;">执行</div>
<div class="a" style="left:243px;top:1257px;width:1047px;height:1px;background:#e8e8ee"></div>
<div class="a" style="left:1290px;top:1257px;width:10px;height:1px;background:#e8e8ee"></div>
<div class="a" style="left:282px;top:151px;width:1px;height:1150px;background:#e8e8ee"></div>
<div class="a" style="left:482px;top:151px;width:1px;height:1150px;background:#e8e8ee"></div>
<div class="a" style="left:782px;top:151px;width:1px;height:1150px;background:#e8e8ee"></div>
<div class="a" style="left:1082px;top:151px;width:1px;height:1150px;background:#e8e8ee"></div>
<div class="a" style="left:1290px;top:151px;width:1px;height:1150px;background:#e8e8ee"></div>
<div class="a" style="left:1299px;top:151px;width:1px;height:1150px;background:#e8e8ee"></div>
<div class="a" style="left:254px;top:963px;width:14px;height:14px;background:#fff;border:1px solid #d6d4e6;border-radius:3px"></div>
<div class="t" style="left:293px;top:959.00px;font-size:13px;line-height:20px;color:#404040;font-weight:400;">界面交互-界面功能</div>
<div class="t" style="left:493px;top:959.00px;font-size:13px;line-height:20px;color:#404040;font-weight:400;">打开侧边栏或对话框-侧边栏</div>
<div class="a" style="left:254px;top:997px;width:14px;height:14px;background:#fff;border:1px solid #d6d4e6;border-radius:3px"></div>
<div class="t" style="left:293px;top:993.00px;font-size:13px;line-height:20px;color:#404040;font-weight:400;">界面交互-界面功能</div>
<div class="t" style="left:493px;top:993.00px;font-size:13px;line-height:20px;color:#404040;font-weight:400;">打开侧边栏或对话框-对话框</div>
<div class="a" style="left:254px;top:1031px;width:14px;height:14px;background:#fff;border:1px solid #d6d4e6;border-radius:3px"></div>
<div class="t" style="left:293px;top:1026.99px;font-size:13px;line-height:20px;color:#404040;font-weight:400;">界面交互-界面功能</div>
<div class="t" style="left:493px;top:1026.99px;font-size:13px;line-height:20px;color:#404040;font-weight:400;">打开网站页面-网站页面渲染</div>
<div class="a" style="left:254px;top:1065px;width:14px;height:14px;background:#fff;border:1px solid #d6d4e6;border-radius:3px"></div>
<div class="t" style="left:293px;top:1060.99px;font-size:13px;line-height:20px;color:#404040;font-weight:400;">界面交互-界面功能</div>
<div class="t" style="left:493px;top:1060.99px;font-size:13px;line-height:20px;color:#404040;font-weight:400;">打开网站页面-组件渲染</div>
<div class="a" style="left:254px;top:1099px;width:14px;height:14px;background:#fff;border:1px solid #d6d4e6;border-radius:3px"></div>
<div class="t" style="left:293px;top:1094.99px;font-size:13px;line-height:20px;color:#404040;font-weight:400;">界面交互-界面功能</div>
<div class="t" style="left:493px;top:1094.99px;font-size:13px;line-height:20px;color:#404040;font-weight:400;">打开记录创建页面</div>
<div class="a" style="left:254px;top:1133px;width:14px;height:14px;background:#fff;border:1px solid #d6d4e6;border-radius:3px"></div>
<div class="t" style="left:293px;top:1128.99px;font-size:13px;line-height:20px;color:#404040;font-weight:400;">界面交互-界面功能</div>
<div class="t" style="left:493px;top:1128.99px;font-size:13px;line-height:20px;color:#404040;font-weight:400;">打开表单页面</div>
<div class="a" style="left:254px;top:1167px;width:14px;height:14px;background:#fff;border:1px solid #d6d4e6;border-radius:3px"></div>
<div class="t" style="left:293px;top:1162.99px;font-size:13px;line-height:20px;color:#404040;font-weight:400;">界面交互-界面功能</div>
<div class="t" style="left:493px;top:1162.99px;font-size:13px;line-height:20px;color:#404040;font-weight:400;">打开工作流创建页面</div>
<div class="a" style="left:254px;top:1201px;width:14px;height:14px;background:#fff;border:1px solid #d6d4e6;border-radius:3px"></div>
<div class="t" style="left:293px;top:1196.99px;font-size:13px;line-height:20px;color:#404040;font-weight:400;">界面交互-界面功能</div>
<div class="t" style="left:493px;top:1196.99px;font-size:13px;line-height:20px;color:#404040;font-weight:400;">打开工作流任务信息页</div>
<div class="a" style="left:254px;top:1235px;width:14px;height:14px;background:#fff;border:1px solid #d6d4e6;border-radius:3px"></div>
<div class="t" style="left:293px;top:1230.99px;font-size:13px;line-height:20px;color:#404040;font-weight:400;">界面交互-界面功能</div>
<div class="t" style="left:493px;top:1230.99px;font-size:13px;line-height:20px;color:#404040;font-weight:400;">打开工作流实例信息页</div>
<div class="a" style="left:244px;top:152px;width:1046px;height:34px;background:#f5f5f7;border-bottom:1px solid #e8e8ee"></div>
<div class="t" style="left:1095px;top:159.00px;font-size:13px;line-height:20px;color:#555;font-weight:400;">操作</div>
<div class="a" style="left:1291px;top:187px;width:8px;height:1110px;background:#ffffff"></div>
<div class="a" style="left:1293px;top:910px;width:5px;height:347px;background:#bdbdbd;border-radius:3px"></div>
</div>
<div class="a" style="left:0px;top:0px;width:1303px;height:1294px;background:rgba(0,0,0,0.2)"></div>
<div class="a" style="left:218px;top:145px;width:900px;height:799px;background:#fff;border:2px solid #5e5e5e;border-radius:3px;box-shadow:0 8px 16px rgba(0,0,0,0.07),0 3px 6px -4px rgba(0,0,0,0.12),0 12px 28px 4px rgba(0,0,0,0.05)"></div>
<div class="a" style="left:240px;top:170px;width:30px;height:11px;background:#c7f8d2;border-radius:5px"></div>
<div class="t" style="left:241px;top:158.03px;font-size:15px;line-height:22px;color:#444;font-weight:400;">流程信息</div>
<svg class="a" style="left:1082px;top:163px;" width="11" height="11" viewBox="0 0 11 11"><path d="M0.5 0.5L10.5 10.5M10.5 0.5L0.5 10.5" stroke="#555" stroke-width="1.2"/></svg>
<div class="a" style="left:220px;top:190px;width:896px;height:1px;background:#ebebeb"></div>
<div class="t" style="left:241px;top:210.84px;font-size:16px;line-height:24px;color:#2a2a2a;font-weight:400;-webkit-text-stroke:0.2px #2a2a2a">自动化文档-优选员工评选</div>
<div class="t" style="left:240px;top:243.38px;font-size:12px;line-height:18px;color:#7a7a7a;font-weight:400;">类型</div>
<div class="t" style="left:240px;top:264.50px;font-size:13px;line-height:20px;color:#333;font-weight:400;">自动化文档-优选员工评选</div>
<div class="t" style="left:240px;top:287.38px;font-size:12px;line-height:18px;color:#7a7a7a;font-weight:400;">开始时间</div>
<div class="t" style="left:240px;top:307.50px;font-size:13px;line-height:20px;color:#222;font-weight:400;">2024/06/14 18:57</div>
<div class="t" style="left:668px;top:243.38px;font-size:12px;line-height:18px;color:#7a7a7a;font-weight:400;">发起人</div>
<div class="t" style="left:668px;top:264.50px;font-size:13px;line-height:20px;color:#2a2a2a;font-weight:400;-webkit-text-stroke:0.12px #2a2a2a">王延峰</div>
<div class="t" style="left:668px;top:287.38px;font-size:12px;line-height:18px;color:#7a7a7a;font-weight:400;">结束时间</div>
<div class="t" style="left:668px;top:307.50px;font-size:13px;line-height:20px;color:#222;font-weight:400;">-</div>
<div class="a" style="left:220px;top:350px;width:896px;height:1px;background:#ececec"></div>
<div class="t" style="left:240px;top:357.50px;font-size:13px;line-height:20px;color:#666;font-weight:400;">处理过程</div>
<div class="t" style="left:312px;top:357.50px;font-size:13px;line-height:20px;color:#333;font-weight:400;">流程图</div>
<div class="t" style="left:371px;top:357.50px;font-size:13px;line-height:20px;color:#666;font-weight:400;">启动表单</div>
<div class="a" style="left:317px;top:381px;width:30px;height:2px;background:#333"></div>
<div class="a" style="left:240px;top:408px;width:30px;height:24px;background:#fff;border:1px solid #dcdce6;border-radius:4px"></div>
<div class="a" style="left:280px;top:408px;width:30px;height:24px;background:#fff;border:1px solid #dcdce6;border-radius:4px"></div>
<div class="a" style="left:320px;top:408px;width:66px;height:24px;background:#fff;border:1px solid #dcdce6;border-radius:4px"></div>
<svg class="a" style="left:249px;top:414px;" width="12" height="12" viewBox="0 0 12 12"><circle cx="5.2" cy="5.2" r="4" fill="none" stroke="#444" stroke-width="0.9"/><path d="M8.2 8.2L10.8 10.8M3.4 5.2H7M5.2 3.4V7" stroke="#444" stroke-width="0.9"/></svg>
<svg class="a" style="left:289px;top:414px;" width="12" height="12" viewBox="0 0 12 12"><circle cx="5.2" cy="5.2" r="4" fill="none" stroke="#444" stroke-width="0.9"/><path d="M8.2 8.2L10.8 10.8M3.4 5.2H7" stroke="#444" stroke-width="0.9"/></svg>
<div class="t" style="left:329px;top:411.38px;font-size:12px;line-height:18px;color:#333;font-weight:400;">自动缩放</div>
<div class="a" style="left:220px;top:898px;width:896px;height:44px;background:#fafafa;border-top:1px solid #e8e8e8"></div>
<svg class="a" style="left:0px;top:0px;pointer-events:none" width="1303" height="1294" viewBox="0 0 1303 1294"><circle cx="261" cy="640" r="16" fill="#fff" stroke="#000" stroke-width="1.7"/><path d="M277.5 640H315" fill="none" stroke="#000" stroke-width="1.7" stroke-linejoin="round"/><polygon points="323,640 314,635.2 314,644.8" fill="#000" stroke="#000" stroke-width="1" stroke-linejoin="round"/><rect x="324" y="605.2" width="87" height="69.2" rx="8.5" fill="#6ec24a"/><g transform="translate(322.8,604.2) scale(0.9)"><path d="m 15,12 c 0.909,-0.845 1.594,-2.049 1.594,-3.385 0,-2.554 -1.805,-4.62199999 -4.357,-4.62199999 -2.55199998,0 -4.28799998,2.06799999 -4.28799998,4.62199999 0,1.348 0.974,2.562 1.89599998,3.405 -0.52899998,0.187 -5.669,2.097 -5.794,4.7560005 v 6.718 h 17 v -6.718 c 0,-2.2980005 -5.5279996,-4.5950005 -6.0509996,-4.7760005 zm -8,6 l 0,5.5 m 11,0 l 0,-5" fill="#fff" stroke="#000" stroke-width="0.5"/><path d="m 15,12 m 2.162,1.009 c 0,2.4470005 -2.158,4.4310005 -4.821,4.4310005 -2.66499998,0 -4.822,-1.981 -4.822,-4.4310005" fill="#fff" stroke="#000" stroke-width="0.5"/><path d="m 15,12 m -6.9,-3.80 c 0,0 2.25099998,-2.358 4.27399998,-1.177 2.024,1.181 4.221,1.537 4.124,0.965 -0.098,-0.57 -0.117,-3.79099999 -4.191,-4.13599999 -3.57499998,0.001 -4.32799998,3.40799999 -4.20799998,4.34799999 z" fill="#000" stroke="#000" stroke-width="0.5"/></g><path d="M364.3 660V668M367.2 660V668M370.1 660V668" stroke="#000" stroke-width="1.8"/><path d="M411.5 640H461" fill="none" stroke="#000" stroke-width="1.7" stroke-linejoin="round"/><polygon points="469,640 460,635.2 460,644.8" fill="#000" stroke="#000" stroke-width="1" stroke-linejoin="round"/><polygon points="491.3,617.6 513.8,640 491.3,662.2 469,640" fill="#fff" stroke="#000" stroke-width="1.7" stroke-linejoin="miter"/><g transform="translate(469.05,617.75) scale(0.89)"><path d="m 16,15 7.43,9.71 -7.43,9.71 3.43,0 5.71,-7.46 5.71,7.46 3.43,0 -7.43,-9.71 7.43,-9.71 -3.43,0 -5.71,7.46 -5.71,-7.46 -3.43,0 z" fill="#000" stroke="#000" stroke-width="1"/></g><path d="M491.3 617.6V472H845" fill="none" stroke="#000" stroke-width="1.7" stroke-linejoin="round"/><polygon points="853,472 844,467.2 844,476.8" fill="#000" stroke="#000" stroke-width="1" stroke-linejoin="round"/><path d="M491.3 662.2V843.4H873.5" fill="none" stroke="#000" stroke-width="1.7" stroke-linejoin="round"/><polygon points="881.5,843.4 872.5,838.6 872.5,848.1999999999999" fill="#000" stroke="#000" stroke-width="1" stroke-linejoin="round"/><rect x="853.8" y="436.8" width="88" height="70.3" rx="8.8" fill="#fff" stroke="#000" stroke-width="1.7"/><g transform="translate(853.4,436.6) scale(0.9)"><path d="m 15,12 c 0.909,-0.845 1.594,-2.049 1.594,-3.385 0,-2.554 -1.805,-4.62199999 -4.357,-4.62199999 -2.55199998,0 -4.28799998,2.06799999 -4.28799998,4.62199999 0,1.348 0.974,2.562 1.89599998,3.405 -0.52899998,0.187 -5.669,2.097 -5.794,4.7560005 v 6.718 h 17 v -6.718 c 0,-2.2980005 -5.5279996,-4.5950005 -6.0509996,-4.7760005 zm -8,6 l 0,5.5 m 11,0 l 0,-5" fill="#fff" stroke="#000" stroke-width="0.5"/><path d="m 15,12 m 2.162,1.009 c 0,2.4470005 -2.158,4.4310005 -4.821,4.4310005 -2.66499998,0 -4.822,-1.981 -4.822,-4.4310005" fill="#fff" stroke="#000" stroke-width="0.5"/><path d="m 15,12 m -6.9,-3.80 c 0,0 2.25099998,-2.358 4.27399998,-1.177 2.024,1.181 4.221,1.537 4.124,0.965 -0.098,-0.57 -0.117,-3.79099999 -4.191,-4.13599999 -3.57499998,0.001 -4.32799998,3.40799999 -4.20799998,4.34799999 z" fill="#000" stroke="#000" stroke-width="0.5"/></g><path d="M898 507V562.5" fill="none" stroke="#000" stroke-width="1.7" stroke-linejoin="round"/><polygon points="898,570.7 893.2,561.7 902.8,561.7" fill="#000" stroke="#000" stroke-width="1" stroke-linejoin="round"/><path d="M721.2 562.5V534H1075V562.5" fill="none" stroke="#000" stroke-width="1.7" stroke-linejoin="round"/><polygon points="721.2,570.7 716.4000000000001,561.7 726.0,561.7" fill="#000" stroke="#000" stroke-width="1" stroke-linejoin="round"/><polygon points="1075,570.9 1070.2,561.9 1079.8,561.9" fill="#000" stroke="#000" stroke-width="1" stroke-linejoin="round"/><circle cx="721.2" cy="587.2" r="15.8" fill="#fff" stroke="#000" stroke-width="1.1"/><circle cx="721.2" cy="587.2" r="13.3" fill="none" stroke="#000" stroke-width="1.1"/><rect x="712.8" y="581.4" width="16.8" height="11.2" fill="#fff" stroke="#000" stroke-width="1"/><path d="M712.8 581.4L721.2 586.8L729.6 581.4" fill="none" stroke="#000" stroke-width="1"/><circle cx="897.8" cy="587.3" r="15.8" fill="#fff" stroke="#000" stroke-width="1.1"/><circle cx="897.8" cy="587.3" r="13.3" fill="none" stroke="#000" stroke-width="1.1"/><circle cx="897.8" cy="587.3" r="9.8" fill="#fff" stroke="#000" stroke-width="2"/><path d="M897.80 580.10L897.80 578.50M901.40 581.06L902.20 579.68M904.04 583.70L905.42 582.90M905.00 587.30L906.60 587.30M904.04 590.90L905.42 591.70M901.40 593.54L902.20 594.92M897.80 594.50L897.80 596.10M894.20 593.54L893.40 594.92M891.56 590.90L890.18 591.70M890.60 587.30L889.00 587.30M891.56 583.70L890.18 582.90M894.20 581.06L893.40 579.68" stroke="#000" stroke-width="0.8"/><path d="M898.3 579.6L897.4 587.9L903.2 590" fill="none" stroke="#000" stroke-width="1.4"/><circle cx="1074.8" cy="587.2" r="15.8" fill="#fff" stroke="#000" stroke-width="1.1"/><circle cx="1074.8" cy="587.2" r="13.3" fill="none" stroke="#000" stroke-width="1.1"/><polygon points="1074.9,577.8 1083.3,592.2 1066.5,592.2" fill="#fff" stroke="#000" stroke-width="1"/><path d="M721.2 602.5V702H845" fill="none" stroke="#000" stroke-width="1.7" stroke-linejoin="round"/><polygon points="853.8,702 844.8,697.2 844.8,706.8" fill="#000" stroke="#000" stroke-width="1" stroke-linejoin="round"/><path d="M898 603V658.5" fill="none" stroke="#000" stroke-width="1.7" stroke-linejoin="round"/><polygon points="898,666.8 893.2,657.8 902.8,657.8" fill="#000" stroke="#000" stroke-width="1" stroke-linejoin="round"/><path d="M1075 602.6V702H950.5" fill="none" stroke="#000" stroke-width="1.7" stroke-linejoin="round"/><polygon points="941.8,702 950.8,697.2 950.8,706.8" fill="#000" stroke="#000" stroke-width="1" stroke-linejoin="round"/><rect x="853.8" y="666.8" width="88" height="70.3" rx="8.8" fill="#fff" stroke="#000" stroke-width="1.7"/><g transform="translate(853.4,666.6) scale(0.9)"><path d="m 15,12 c 0.909,-0.845 1.594,-2.049 1.594,-3.385 0,-2.554 -1.805,-4.62199999 -4.357,-4.62199999 -2.55199998,0 -4.28799998,2.06799999 -4.28799998,4.62199999 0,1.348 0.974,2.562 1.89599998,3.405 -0.52899998,0.187 -5.669,2.097 -5.794,4.7560005 v 6.718 h 17 v -6.718 c 0,-2.2980005 -5.5279996,-4.5950005 -6.0509996,-4.7760005 zm -8,6 l 0,5.5 m 11,0 l 0,-5" fill="#fff" stroke="#000" stroke-width="0.5"/><path d="m 15,12 m 2.162,1.009 c 0,2.4470005 -2.158,4.4310005 -4.821,4.4310005 -2.66499998,0 -4.822,-1.981 -4.822,-4.4310005" fill="#fff" stroke="#000" stroke-width="0.5"/><path d="m 15,12 m -6.9,-3.80 c 0,0 2.25099998,-2.358 4.27399998,-1.177 2.024,1.181 4.221,1.537 4.124,0.965 -0.098,-0.57 -0.117,-3.79099999 -4.191,-4.13599999 -3.57499998,0.001 -4.32799998,3.40799999 -4.20799998,4.34799999 z" fill="#000" stroke="#000" stroke-width="0.5"/></g><path d="M898 737.1V818.5" fill="none" stroke="#000" stroke-width="1.7" stroke-linejoin="round"/><polygon points="898.4,826.8 893.6,817.8 903.1999999999999,817.8" fill="#000" stroke="#000" stroke-width="1" stroke-linejoin="round"/><circle cx="898.4" cy="843.7" r="15.4" fill="#fff" stroke="#000" stroke-width="3.2"/></svg>
<div class="t" style="left:67px;width:600px;text-align:center;top:633.87px;font-size:11px;line-height:12px;color:#111;font-weight:400;">投票</div>
<div class="t" style="left:597.8px;width:600px;text-align:center;top:465.87px;font-size:11px;line-height:12px;color:#111;font-weight:400;">录入信息</div>
<div class="t" style="left:597.8px;width:600px;text-align:center;top:695.87px;font-size:11px;line-height:12px;color:#111;font-weight:400;">确认录入</div>
<div class="t" style="left:314.6px;width:600px;text-align:center;top:442.36px;font-size:10.1px;line-height:12px;color:#111;font-weight:400;">同意人数大于不</div>
<div class="t" style="left:314.6px;width:600px;text-align:center;top:453.66px;font-size:10.1px;line-height:12px;color:#111;font-weight:400;">同意人数</div>
<div class="t" style="left:314.6px;width:600px;text-align:center;top:813.26px;font-size:10.1px;line-height:12px;color:#111;font-weight:400;">同意人数未超过</div>
<div class="t" style="left:314.6px;width:600px;text-align:center;top:825.56px;font-size:10.1px;line-height:12px;color:#111;font-weight:400;">不同意人数</div>
<div class="t" style="left:356.20000000000005px;width:600px;text-align:center;top:578.36px;font-size:10.1px;line-height:12px;color:#111;font-weight:400;">捕获消息</div>
<div class="t" style="left:533px;width:600px;text-align:center;top:578.22px;font-size:9.7px;line-height:12px;color:#111;font-weight:400;">等待5天后自动触</div>
<div class="t" style="left:533px;width:600px;text-align:center;top:590.26px;font-size:10.1px;line-height:12px;color:#111;font-weight:400;">发</div>
<div class="t" style="left:730.4000000000001px;width:600px;text-align:center;top:581.56px;font-size:10.1px;line-height:12px;color:#111;font-weight:400;">捕获信号</div>
<div class="a" style="left:0px;top:40px;width:1303px;height:1254px;border-left:1px solid rgba(255,255,255,0.22);border-bottom:1px solid rgba(255,255,255,0.22);border-radius:0 0 0 10px;pointer-events:none"></div>
</body></html>
